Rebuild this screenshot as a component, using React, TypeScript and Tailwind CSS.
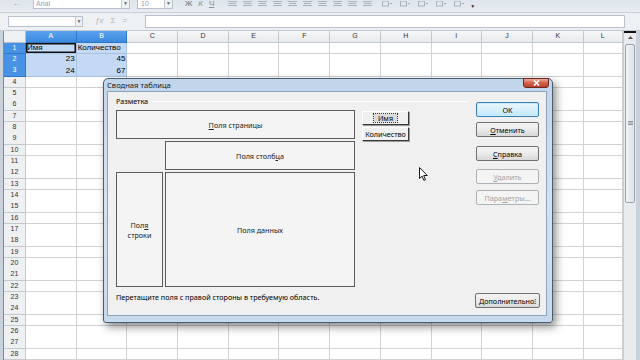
import React from 'react';

const cols = ['A', 'B', 'C', 'D', 'E', 'F', 'G', 'H', 'I', 'J', 'K', 'L'];
const rows = Array.from({ length: 28 }, (_, i) => i + 1);

const cells: Record<string, { v: string; right?: boolean }> = {
  A1: { v: 'Имя' },
  B1: { v: 'Количество' },
  A2: { v: '23', right: true },
  B2: { v: '45', right: true },
  A3: { v: '24', right: true },
  B3: { v: '67', right: true },
};

const gridCols = 'grid grid-cols-[22px_repeat(11,50.7px)_1fr]';

function Toolbar() {
  return (
    <div className="h-[14px] flex items-start bg-gradient-to-b from-[#dfe5ec] to-[#e9edf2] border-b border-[#c9d0d8]">
      <div className="w-[33px] flex justify-center">
        <span className="text-[8px] leading-[8px] text-[#9aa3ad]">←</span>
      </div>
      <div className="w-[97px] h-[9px] flex bg-white border border-t-0 border-[#b9c2cc]">
        <span className="flex-1 pl-[2px] text-[7px] leading-[7px] text-[#9aa0a8]">Arial</span>
        <div className="w-[8px] border-l border-[#c7cdd4] bg-[#eef1f4] flex justify-center">
          <span className="text-[5px] leading-[7px] text-[#666]">▼</span>
        </div>
      </div>
      <div className="ml-[7px] w-[36px] h-[9px] flex bg-white border border-t-0 border-[#b9c2cc]">
        <span className="flex-1 pl-[3px] text-[7px] leading-[7px] text-[#9aa0a8]">10</span>
        <div className="w-[8px] border-l border-[#c7cdd4] bg-[#eef1f4] flex justify-center">
          <span className="text-[5px] leading-[7px] text-[#666]">▼</span>
        </div>
      </div>
      <div className="ml-[12px] flex gap-[6px] text-[8px] leading-[7px] text-[#8a929b]">
        <span className="font-bold">Ж</span>
        <span className="italic">К</span>
        <span className="underline">Ч</span>
      </div>
      <div className="ml-[14px] flex gap-[6px] pt-[1px]">
        {[0, 1, 2, 3, 4, 5, 6, 7, 8, 9].map((i) => (
          <svg key={i} width="9" height="6" viewBox="0 0 9 6">
            <path d="M0 0.5h9M1 2.5h7M0 4.5h9" stroke="#a9b1ba" strokeWidth="1" />
          </svg>
        ))}
      </div>
      <div className="ml-[10px] flex gap-[8px] pt-[1px]">
        {[0, 1, 2, 3, 4].map((i) => (
          <svg key={i} width="10" height="6" viewBox="0 0 10 6">
            <rect x="0.5" y="0" width="6" height="5" fill="none" stroke="#a9b1ba" />
            <path d="M8 2l1 1.5 1-1.5z" fill="#8a929b" />
          </svg>
        ))}
      </div>
      <span className="ml-[6px] mt-[4px] text-[5px] leading-[5px] text-[#333]">▼</span>
    </div>
  );
}

function FormulaBar() {
  return (
    <div className="h-[19px] flex items-center bg-[#eef1f4] border-b border-[#c5cbd2]">
      <div className="ml-[8px] w-[75px] h-[11px] flex bg-white border border-[#b9c2cc]">
        <div className="flex-1" />
        <div className="w-[7px] border-l border-[#c7cdd4] bg-[#eef1f4] flex justify-center">
          <span className="text-[5px] leading-[9px] text-[#666]">▼</span>
        </div>
      </div>
      <div className="ml-[12px] flex items-center gap-[7px] text-[8px] leading-[8px] text-[#b0b6bd]">
        <span className="italic">ƒx</span>
        <span>Σ</span>
        <span>=</span>
      </div>
      <div className="ml-[18px] mr-[15px] flex-1 h-[13px] bg-white border border-[#b9c2cc]" />
    </div>
  );
}

function Sheet() {
  return (
    <div className="flex-1 flex font-['Liberation_Sans',Arial,sans-serif]">
      <div className="w-[4px] bg-[#c9d1db] border-r border-[#7d8793]" />
      <div className="flex-1 flex flex-col overflow-hidden">
        <div className={`${gridCols} h-[12px]`}>
          <div className="bg-[#eef0f2] border-r border-b border-[#b8bec6]" />
          {cols.map((c) => {
            const sel = c === 'A' || c === 'B';
            return (
              <div
                key={c}
                className={
                  sel
                    ? 'flex items-center justify-center text-[7px] text-white bg-gradient-to-b from-[#5aa2ef] to-[#3b8ae0] border-r border-b border-[#2f76c4]'
                    : 'flex items-center justify-center text-[7px] text-[#333] bg-gradient-to-b from-[#f6f7f8] to-[#e8eaec] border-r border-b border-[#c4c9cf]'
                }
              >
                {c}
              </div>
            );
          })}
        </div>
        {rows.map((r) => {
          const rowSel = r <= 3;
          return (
            <div key={r} className={`${gridCols} h-[11.33px]`}>
              <div
                className={
                  rowSel
                    ? 'flex items-center justify-center text-[7px] text-white bg-[#4792e4] border-r border-b border-[#2f76c4]'
                    : 'flex items-center justify-center text-[7px] text-[#333] bg-[#eef0f2] border-r border-b border-[#c4c9cf]'
                }
              >
                {r}
              </div>
              {cols.map((c) => {
                const key = `${c}${r}`;
                const cell = cells[key];
                const sel = rowSel && (c === 'A' || c === 'B');
                const cursor = key === 'A1';
                return (
                  <div
                    key={key}
                    className={[
                      'flex items-center px-[1px] text-[8px] leading-[8px] text-black border-r border-b whitespace-nowrap',
                      sel ? 'bg-[#c4d9f3] border-[#a9c1de]' : 'bg-white border-[#d2d2d2]',
                      cell?.right ? 'justify-end' : 'justify-start',
                      cursor ? 'shadow-[inset_0_0_0_1.5px_#111]' : '',
                    ].join(' ')}
                  >
                    {cell?.v}
                  </div>
                );
              })}
            </div>
          );
        })}
      </div>
      <div className="w-[13px] flex flex-col bg-[#e9ebee] border-l border-[#c8cdd3]">
        <div className="h-[2px] bg-[#111]" />
        <div className="h-[10px] flex items-center justify-center">
          <svg width="5" height="3" viewBox="0 0 5 3">
            <path d="M0 3l2.5-3 2.5 3z" fill="#555" />
          </svg>
        </div>
        <div className="mt-[1px] mx-[1px] h-[159px] rounded-[2px] border border-[#9aa3ad] bg-gradient-to-r from-[#f3f4f5] to-[#dfe2e6] flex items-center justify-center">
          <svg width="5" height="4" viewBox="0 0 5 4">
            <path d="M0 0.5h5M0 2h5M0 3.5h5" stroke="#7a838d" strokeWidth="0.8" />
          </svg>
        </div>
      </div>
      <div className="w-[4px] bg-[#c9d1db]" />
    </div>
  );
}

function Btn({
  children,
  def,
  disabled,
  className = '',
}: {
  children: React.ReactNode;
  def?: boolean;
  disabled?: boolean;
  className?: string;
}) {
  let look =
    'border-[#707070] bg-gradient-to-b from-[#f3f3f3] via-[#ebebeb] to-[#d8d8d8] text-black';
  if (def) look = 'border-[#3c7fb1] bg-gradient-to-b from-[#eaf6fd] via-[#d9f0fc] to-[#bee6fd] text-black shadow-[inset_0_0_0_1px_#c9eafc]';
  if (disabled) look = 'border-[#adb2b5] bg-[#f4f4f4] text-[#a3a3a3]';
  return (
    <div className={`h-[15px] w-[63px] flex items-center justify-center rounded-[2px] border text-[7.2px] leading-[8px] ${look} ${className}`}>
      {children}
    </div>
  );
}

function Area({ children, className = '' }: { children: React.ReactNode; className?: string }) {
  return (
    <div className={`bg-[#f4f4f4] border-[1.5px] border-[#5c5c5c] flex items-center justify-center text-center text-[7.2px] leading-[10px] text-[#222] ${className}`}>
      {children}
    </div>
  );
}

function Dialog() {
  return (
    <div className="absolute left-[103px] top-[78px] w-[450px] h-[245px] rounded-t-[5px] rounded-b-[3px] border border-[#4d5d70] bg-gradient-to-b from-[#c1d5ea] via-[#d3e2f2] to-[#c7d9ec] shadow-[3px_4px_8px_rgba(0,0,0,0.45)] flex flex-col pl-[3px] pr-[5px] pb-[6px] font-['Noto_Sans','Liberation_Sans',sans-serif]">
      <div className="h-[12px] flex items-center">
        <span className="text-[7.6px] leading-[8px] text-[#1a1a1a]">Сводная таблица</span>
      </div>
      <div className="absolute top-[-1px] right-[3px] w-[26px] h-[10px] rounded-b-[3px] border border-[#6b2a20] bg-gradient-to-b from-[#e9a99c] via-[#d2604b] to-[#c0402a] flex items-center justify-center">
        <svg width="7" height="6" viewBox="0 0 7 6">
          <path d="M1 0.5l5 5M6 0.5l-5 5" stroke="#fff" strokeWidth="1.6" />
        </svg>
      </div>
      <div className="flex-1 flex bg-[#f0f0f0] border border-[#8ea2ba] pl-[8px] pr-[7px] pb-[7px]">
        <div className="w-[352px] flex flex-col pt-[5px]">
          <div className="h-[8px] flex items-center gap-[3px]">
            <span className="text-[7.2px] leading-[8px] text-black">Разметка</span>
            <div className="flex-1 h-[1px] bg-[#d5d5d5] border-b border-white" />
          </div>
          <div className="mt-[5px] flex items-start">
            <div className="grid grid-cols-[47px_190px] grid-rows-[29px_29px_115px] gap-[2px]">
              <Area className="col-span-2">
                <span>
                  <span className="underline">П</span>оля страницы
                </span>
              </Area>
              <div />
              <Area>
                <span>
                  Поля столб<span className="underline">ц</span>а
                </span>
              </Area>
              <Area>
                <span>
                  Пол<span className="underline">я</span>
                  <br />
                  строки
                </span>
              </Area>
              <Area>
                <span>
                  Поля <span className="underline">д</span>анных
                </span>
              </Area>
            </div>
            <div className="ml-[7px] mt-[1px] w-[47px] flex flex-col gap-[2px]">
              <div className="h-[14px] flex items-center justify-center bg-[#f0f0f0] border border-t-white border-l-white border-b-[#3a3a3a] border-r-[#3a3a3a] shadow-[1px_1px_0_#9a9a9a]">
                <span className="px-[4px] bg-[#dcdcdc] outline outline-1 outline-dotted outline-[#333] text-[7.2px] leading-[8px] text-black">Имя</span>
              </div>
              <div className="h-[14px] flex items-center justify-center bg-[#f0f0f0] border border-t-white border-l-white border-b-[#3a3a3a] border-r-[#3a3a3a] shadow-[1px_1px_0_#9a9a9a] text-[7.2px] leading-[8px] text-black">
                Количество
              </div>
            </div>
          </div>
          <div className="mt-[6px] text-[7.2px] leading-[8px] text-black whitespace-nowrap">
            Перетащите поля с правой стороны в требуемую область.
          </div>
        </div>
        <div className="ml-[8px] w-[63px] flex flex-col pt-[10px]">
          <Btn def>OK</Btn>
          <Btn className="mt-[5px]">
            <span>
              <span className="underline">О</span>тменить
            </span>
          </Btn>
          <Btn className="mt-[9px]">
            <span>
              <span className="underline">С</span>правка
            </span>
          </Btn>
          <Btn disabled className="mt-[8px] h-[14px]">
            <span>
              <span className="underline">У</span>далить
            </span>
          </Btn>
          <Btn disabled className="mt-[6px] h-[14px]">
            <span>
              Пара<span className="underline">м</span>етры...
            </span>
          </Btn>
          <Btn className="mt-auto -ml-[1px] !w-[65px] h-[14px] !justify-between px-[3px]">
            <span>Дополнительно</span>
            <span>⁝</span>
          </Btn>
        </div>
      </div>
    </div>
  );
}

function Cursor() {
  return (
    <svg className="absolute left-[419px] top-[167px]" width="9" height="14" viewBox="0 0 9 14">
      <path
        d="M0.5 0.5v11l2.6-2.4 1.8 4.2 1.6-0.7-1.8-4.1h3.6z"
        fill="#fff"
        stroke="#000"
        strokeWidth="0.9"
        strokeLinejoin="round"
      />
    </svg>
  );
}

export default function App() {
  return (
    <div className="relative w-[640px] h-[360px] overflow-hidden bg-white flex flex-col font-['Liberation_Sans',Arial,sans-serif]">
      <Toolbar />
      <FormulaBar />
      <Sheet />
      <Dialog />
      <Cursor />
    </div>
  );
}
